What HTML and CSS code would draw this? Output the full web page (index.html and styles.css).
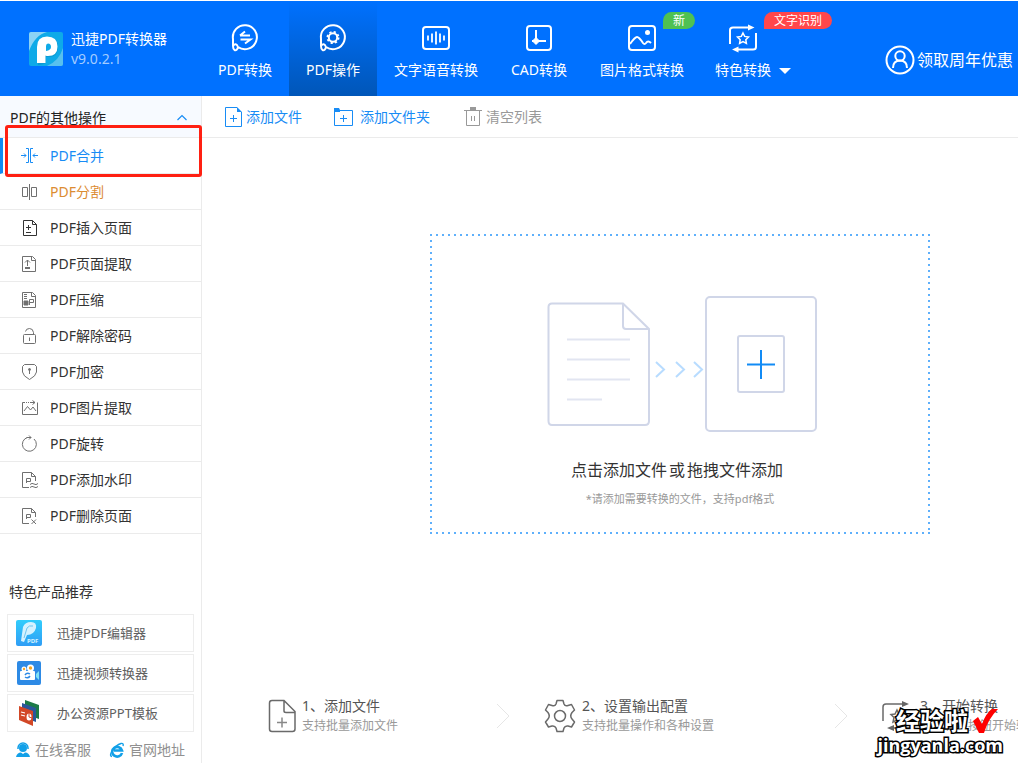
FILE: index.html
```html
<!DOCTYPE html>
<html lang="zh-CN">
<head>
<meta charset="utf-8">
<meta name="viewport" content="width=device-width, initial-scale=1">
<title>迅捷PDF转换器</title>
<link rel="stylesheet" href="styles.css">
</head>
<body>
<div class="app">
  <header class="header">
    <div class="brand">
      <svg class="brand-logo" viewBox="0 0 34 34" width="34" height="34">
        <rect width="34" height="34" rx="2" fill="#0eaae8"/>
        <path d="M0 19V2Q0 0 2 0H18Q6 3 0 19Z" fill="#8bd3f5"/>
        <path d="M34 16V32Q34 34 32 34H18Q30 29 34 16Z" fill="#58c0ee"/>
        <path d="M9 33V15Q9 5 18 5Q29 5 29 15Q29 25 20 25H17V31Q14 33 9 33Z" fill="#0789bd" opacity=".45"/>
        <path d="M8 31V15Q8 4.500 18 4.500Q28.500 4.500 28.500 14.500Q28.500 24 19 24Q17.500 24 16.500 23.500V31Z" fill="#fff"/>
        <path d="M17 19V14Q17 11.500 19 11.500Q22 11.500 22 15Q22 18 17 19Z" fill="#0eaae8"/>
      </svg>
      <div class="brand-text">
        <span class="brand-name">迅捷PDF转换器</span>
        <span class="brand-version">v9.0.2.1</span>
      </div>
    </div>
    <nav class="nav">
      <a class="nav-item" href="#convert">
        <svg class="nav-icon" viewBox="0 0 30 30"><path d="M3 16A12 12 0 1 1 8 24Q7 28 4.500 27Q3 26 3 23ZM3 23Q6 19 8 24" stroke-width="2"/><path d="M10 12.500H20M15 8.500L10 12.500M10.500 16.500H20.500L15 20.500" stroke-width="2"/></svg>
        <span>PDF转换</span>
      </a>
      <a class="nav-item nav-item-active" href="#operate" aria-current="page">
        <svg class="nav-icon" viewBox="0 0 30 30"><path d="M3 16A12 12 0 1 1 8 24Q7 28 4.500 27Q3 26 3 23ZM3 23Q6 19 8 24" stroke-width="2"/><circle cx="15" cy="14.500" r="4.200" stroke-width="2"/><circle cx="15" cy="14.500" r="5.600" stroke-width="1.800" stroke-dasharray="2.200 2.198"/></svg>
        <span>PDF操作</span>
      </a>
      <a class="nav-item nav-item-wide" href="#speech">
        <svg class="nav-icon" viewBox="0 0 30 30"><rect x="2" y="4" width="26" height="22" rx="3" stroke-width="2"/><path d="M7 12.500V17.500M11 10.500V19.500M15 8.500V21.500M19 10.500V19.500M23 12.500V17.500" stroke-width="1.800"/></svg>
        <span>文字语音转换</span>
      </a>
      <a class="nav-item" href="#cad">
        <svg class="nav-icon" viewBox="0 0 30 30"><rect x="3" y="3" width="24" height="24" rx="3" stroke-width="2"/><path d="M12 7V21M8 18H22" stroke-width="2"/><path d="M12 14.500L15.500 18L12 21.500L8.500 18Z" fill="#fff"/></svg>
        <span>CAD转换</span>
      </a>
      <a class="nav-item nav-item-wide" href="#image">
        <svg class="nav-icon" viewBox="0 0 30 30"><rect x="2" y="3" width="26" height="24" rx="3" stroke-width="2"/><path d="M3 21Q8 14 10 14T16 20Q17.500 22 19 20Q21 17 24 20" stroke-width="2"/><circle cx="20.500" cy="9.500" r="2.500" fill="#fff" stroke="none"/></svg>
        <span>图片格式转换</span>
        <em class="badge badge-new">新</em>
      </a>
      <a class="nav-item nav-item-menu" href="#special">
        <svg class="nav-icon" viewBox="0 0 30 30"><path d="M2 21V7Q2 4.500 5 4.500H21M28 10V24Q28 26.500 25 26.500H9" stroke-width="2"/><path d="M20 1.500L26.500 4.500L20 7.500ZM10.500 23.500L4 26.500L10.500 29.500Z" fill="#fff" stroke="none"/><path d="M15 10L16.700 13.400L20.500 14L17.800 16.700L18.400 20.500L15 18.700L11.600 20.500L12.200 16.700L9.500 14L13.300 13.400Z" stroke-width="1.500"/></svg>
        <span class="nav-menu-label">特色转换<i class="caret"></i></span>
        <em class="badge badge-ocr">文字识别</em>
      </a>
    </nav>
    <a class="user" href="#user">
      <svg viewBox="0 0 30 30" width="30" height="30" fill="none" stroke="#fff" stroke-width="2"><circle cx="15" cy="15" r="13.500"/><circle cx="15" cy="11" r="4.700"/><path d="M8 23Q8 15.500 15 15.500T22 23"/></svg>
      <span>领取周年优惠</span>
    </a>
  </header>

  <div class="body">
    <aside class="sidebar">
      <button class="group-title" type="button" aria-expanded="true">
        <span>PDF的其他操作</span>
        <svg viewBox="0 0 12 8" width="12" height="8"><path d="M1.500 6L6 1.500L10.500 6" fill="none" stroke="#188cf5" stroke-width="1.200"/></svg>
      </button>
      <ul class="tools">
        <li><a class="tool tool-active" href="#merge"><svg class="tool-icon" viewBox="0 0 18 18"><path d="M6 1.500H8.500V15.500H6M13 1.500H10.500V15.500H13M1 8.500H6M4 6.500L6 8.500L4 10.500M18 8.500H13M15 6.500L13 8.500L15 10.500"/></svg>PDF合并</a></li>
        <li><a class="tool tool-hover" href="#split"><svg class="tool-icon" viewBox="0 0 18 18"><path d="M2.500 4.500H7.500V13.500H2.500ZM11.500 4.500H16.500V13.500H11.500ZM9.500 1V17"/></svg>PDF分割</a></li>
        <li><a class="tool" href="#insert"><svg class="tool-icon tool-icon-dark" viewBox="0 0 18 18"><path d="M3.500 1.500H12.500L16.500 5.500V16.500H3.500ZM12.500 1.500V5.500H16.500M6 8.500H11M8.500 6V11M6 13.500H11"/></svg>PDF插入页面</a></li>
        <li><a class="tool" href="#pages"><svg class="tool-icon" viewBox="0 0 18 18"><path d="M2.500 1.500H12.500L15.500 4.500V16.500H2.500ZM11.500 1.500V5.500H15.500M7.500 11V5M5 7.500L7.500 5L10 7.500M5 12.500H10M5 13.500H10"/></svg>PDF页面提取</a></li>
        <li><a class="tool" href="#compress"><svg class="tool-icon" viewBox="0 0 18 18"><path d="M2.500 1.500H12.500L15.500 4.500V16.500H2.500ZM11.500 1.500V5.500H15.500M9.500 14V8.500H13.500V11.500H10"/><path d="M5.500 3V9" stroke-width="3" stroke-dasharray="1 1"/><path d="M4 10H8V14H4Z" fill="currentColor"/></svg>PDF压缩</a></li>
        <li><a class="tool" href="#unlock"><svg class="tool-icon" viewBox="0 0 18 18"><rect x="3.500" y="7.500" width="12" height="9" rx="1"/><path d="M5.500 4.500Q6 1.500 9.500 1.500T13.500 5.500V7.500M9.500 10.500V14"/></svg>PDF解除密码</a></li>
        <li><a class="tool" href="#encrypt"><svg class="tool-icon" viewBox="0 0 18 18"><path d="M4.500 1.500H14.500L16.500 3.500V9Q16 13 9.500 16.500Q3 13 2.500 9V3.500Z"/><circle cx="9.500" cy="6.500" r="1" fill="currentColor"/><path d="M9.500 7V11"/></svg>PDF加密</a></li>
        <li><a class="tool" href="#images"><svg class="tool-icon" viewBox="0 0 18 18"><path d="M5 3.500H2.500V15.500H17.500V3.500M4 12L7.500 7.500L10.500 11L13 8L16 12M11 3.500H15M12.500 1.500L15 3.500L12.500 5.500"/><path d="M6 3.500H11" stroke-dasharray="1 1"/></svg>PDF图片提取</a></li>
        <li><a class="tool" href="#rotate"><svg class="tool-icon" viewBox="0 0 18 18"><path d="M7.500 2.500A7 7 0 1 0 14 4M6.500 2.500H11M9 .5L11 2.500L9 4.500"/></svg>PDF旋转</a></li>
        <li><a class="tool" href="#watermark"><svg class="tool-icon" viewBox="0 0 18 18"><path d="M9 16.500H2.500V1.500H11.500L15.500 5.500V10M11.500 1.500V5.500H15.500M6.500 12V7.500H10.500V10.500H7M10 13.500Q12 11.500 14 13T18 12.500M10 16.500Q12 14.500 14 16T18 15.500"/></svg>PDF添加水印</a></li>
        <li><a class="tool" href="#delete"><svg class="tool-icon" viewBox="0 0 18 18"><path d="M9 16.500H2.500V1.500H11.500L15.500 5.500V10M11.500 1.500V5.500H15.500M6.500 12V7.500H10.500V10.500H7M11.500 12.500L16 17M16 12.500L11.500 17"/></svg>PDF删除页面</a></li>
      </ul>
      <div class="highlight"></div>

      <section class="products">
        <h2 class="products-title">特色产品推荐</h2>
        <a class="product" href="#editor">
          <svg viewBox="0 0 26 26" width="26" height="26"><defs><linearGradient id="edit" x2="0" y2="1"><stop stop-color="#32cdfc"/><stop offset="1" stop-color="#2f9df5"/></linearGradient></defs><rect width="26" height="26" rx="2" fill="url(#edit)"/><path d="M5 21L7 7Q9 2 15 2Q21 2 20 8Q18 15 11 15L8 22Z" fill="#d5f2ff"/><path d="M8 18L11 8Q13 5 17 6" fill="none" stroke="#6fc5ef"/><text x="11" y="23" class="logo-caption">PDF</text></svg>
          <span>迅捷PDF编辑器</span>
        </a>
        <a class="product" href="#video">
          <svg viewBox="0 0 26 26" width="26" height="26"><rect x="1" y="1" width="24" height="24" rx="2" fill="#2d8ae5"/><circle cx="8" cy="9" r="2.500" fill="#fff"/><circle cx="14.500" cy="8" r="3.500" fill="#fff"/><circle cx="8" cy="9" r="1.200" fill="#f5a623"/><circle cx="14.500" cy="8" r="1.700" fill="#f5a623"/><rect x="4" y="11" width="15" height="9" rx="1" fill="#fff"/><path d="M20 14L23 11V20L20 17Z" fill="#7fe0f5"/><path d="M9 15Q11 12 14 14M14 16Q12 19 9 17" fill="none" stroke="#2d8ae5" stroke-width="1.500"/></svg>
          <span>迅捷视频转换器</span>
        </a>
        <a class="product" href="#ppt">
          <svg viewBox="0 0 26 26" width="26" height="26"><path d="M9 0L23 5V19L9 14Z" fill="#1c7a47"/><path d="M6 3L20 8V22L6 17Z" fill="#2b579a"/><path d="M3 6L17 11V26L3 20Z" fill="#d24726"/><path d="M5 12L9 13M5 15L9 16" stroke="#fff" stroke-width="1.200"/><ellipse cx="13" cy="17" rx="2.500" ry="3.500" fill="#fff"/><path d="M13 17V13M13 17L16 18" stroke="#d24726"/></svg>
          <span>办公资源PPT模板</span>
        </a>
        <div class="support">
          <a href="#service"><svg viewBox="0 0 16 16" width="16" height="16"><circle cx="8" cy="6" r="4" fill="#12a0e8"/><path d="M3 7V6A5 5 0 0 1 13 6V7" fill="none" stroke="#12a0e8" stroke-width="1.500"/><path d="M1 15Q2 10.500 6 10.500L8 12L10 10.500Q14 10.500 15 15Z" fill="#12a0e8"/></svg>在线客服</a>
          <a href="#site"><svg viewBox="0 0 16 16" width="16" height="16"><path d="M13 11A5 4.800 0 1 1 13 8.500H5" fill="none" stroke="#12a0e8" stroke-width="2.600"/><path d="M3 14.500Q0 14 3 9Q7 3 12 1.500Q15 1 14 4" fill="none" stroke="#12a0e8" stroke-width="1.400"/></svg>官网地址</a>
        </div>
      </section>
    </aside>

    <main class="main">
      <div class="toolbar">
        <button class="action" type="button"><svg viewBox="0 0 17 20" width="17" height="20"><path d="M12 .5H.5V19.500H16.500V5" /><path d="M12 0L17 5H12Z" fill="currentColor" stroke="none"/><path d="M5 11.500H12M8.500 8V15"/></svg>添加文件</button>
        <button class="action" type="button"><svg viewBox="0 0 22 20" width="22" height="20"><path d="M.5 3.500H18.500V18.500H.5Z"/><path d="M0 1H5L6 3V5H0Z" fill="currentColor" stroke="none"/><path d="M6 11.500H13M9.500 8V15"/></svg>添加文件夹</button>
        <button class="action action-muted" type="button"><svg viewBox="-2 0 20 20" width="20" height="20"><path d="M0 3.500H18M2.500 4V18.500H15.500V4M7.500 9V14M10.500 9V14"/><path d="M6 0H12V3H6Z" fill="currentColor" stroke="none"/></svg>清空列表</button>
      </div>
      <div class="stage">
        <button class="dropzone" type="button">
          <svg class="dropzone-art" viewBox="547 295 271 136" width="271" height="136" fill="none" stroke-width="2" stroke="#d0d6e8">
            <path d="M552 302.500H623L649 328V420Q649 424 645 424H552Q548.500 424 548.500 420V306Q548.500 302.500 552 302.500ZM623 303V325Q623 328 626 328H649"/>
            <path d="M567 338.500H630M567 358.500H630M567 378.500H630M567 398.500H602" stroke="#e2e5f1"/>
            <path d="M656 361L664 368.500L656 376M676 361L684 368.500L676 376M694 361L702 368.500L694 376" stroke="#b8dcff"/>
            <rect x="706" y="296" width="110" height="134" rx="4"/>
            <rect x="738" y="335" width="46" height="56" rx="2"/>
            <path d="M747 363.500H775M761 349V378" stroke="#128bf5"/>
          </svg>
          <span class="dropzone-title"><span>点击添加文件</span><span>或</span><span>拖拽文件添加</span></span>
          <span class="dropzone-note">*请添加需要转换的文件，支持pdf格式</span>
        </button>
      </div>
      <ol class="steps">
        <li class="step">
          <svg class="step-icon" viewBox="0 0 32 34"><path d="M4 1.500H16L27 12.500V30Q27 32.500 24.500 32.500H4Q1.500 32.500 1.500 30V4Q1.500 1.500 4 1.500ZM16 2V12Q16 13.500 18 13.500H27"/><path d="M9 23.500H19M14 18.500V28.500" stroke="#888"/></svg>
          <div class="step-text"><strong>1、添加文件</strong><small>支持批量添加文件</small></div>
          <svg class="step-arrow" viewBox="0 0 14 26"><path d="M1 1L13 13L1 25"/></svg>
        </li>
        <li class="step">
          <svg class="step-icon" viewBox="0 0 32 34"><path d="M12 5L13 1.500H19L20 5Q21 7.500 24 6.500L27.500 5.500L30.500 11L28 13.500Q25.500 17 28 20L30.500 23L27.500 28L24 27Q21 26.500 20 29L19 32.500H13L12 29Q11 26.500 8 27L4.500 28L1.500 23L4 20Q6.500 17 4 13.500L1.500 11L4.500 5.500L8 6.500Q11 7.500 12 5Z" stroke-linejoin="round"/><circle cx="16" cy="17" r="5.500"/></svg>
          <div class="step-text"><strong>2、设置输出配置</strong><small>支持批量操作和各种设置</small></div>
          <svg class="step-arrow" viewBox="0 0 14 26"><path d="M1 1L13 13L1 25"/></svg>
        </li>
        <li class="step">
          <svg class="step-icon" viewBox="0 0 32 34"><path d="M1 22V8Q1 5 4 5H22M30 12V26Q30 29 27 29H9"/><path d="M20 2L27 5L20 8ZM12 26L5 29L12 32Z" fill="#666" stroke="none"/><path d="M15 11L17 15L21 15.500L18 18.500L19 23L15 21L11 23L12 18.500L9 15.500L13 15Z"/></svg>
          <div class="step-text"><strong>3、开始转换</strong><small>点击转换按钮开始转换</small></div>
        </li>
      </ol>
    </main>
  </div>

  <div class="stamp">
    <div class="stamp-top"><span>经验啦</span><svg viewBox="0 0 25 26" width="25" height="26"><path d="M0 13L5 9L9 16Q13 5 19 1H25Q15 11 11 25H6Z" fill="#f00"/></svg></div>
    <div class="stamp-site">jingyanla.com</div>
  </div>
</div>
</body>
</html>
```
FILE: styles.css
```css
* { box-sizing: border-box; }

body {
  margin: 0;
  background: #fff;
  color: #333;
  font: 14px/20px "Noto Sans", "Noto Sans CJK SC", sans-serif;
}

a { color: inherit; text-decoration: none; }
button { border: 0; padding: 0; background: none; color: inherit; font: inherit; cursor: pointer; }
ul, ol { margin: 0; padding: 0; list-style: none; }
svg { flex: none; }

.app {
  position: relative;
  display: flex;
  flex-direction: column;
  min-height: 100vh;
  padding-top: 1px;
  overflow: hidden;
}

/* Header */
.header { display: flex; height: 95px; background: #0071ff; color: #fff; }
.brand { display: flex; align-items: center; gap: 8px; width: 201px; padding-left: 29px; }
.brand-text { display: flex; flex-direction: column; }
.brand-version { color: #a3ccff; }
.nav { display: flex; }
.nav-item {
  position: relative;
  display: flex;
  flex-direction: column;
  align-items: center;
  gap: 7px;
  width: 88px;
  padding-top: 22px;
  white-space: nowrap;
}
.nav-item-wide { width: 118px; }
.nav-item-menu { width: 84px; }
.nav-item-active { background: linear-gradient(#0071ff, #0056b8); }
.nav-icon { width: 30px; height: 30px; fill: none; stroke: #fff; }
.nav-menu-label { position: relative; }
.caret {
  position: absolute;
  left: 64px;
  top: 8px;
  border: 6px solid transparent;
  border-top-color: #fff;
  border-bottom: 0;
}
.badge {
  position: absolute;
  top: 11px;
  padding: 0 10px;
  border-radius: 9px 9px 9px 0;
  font-size: 12px;
  line-height: 17px;
  font-style: normal;
}
.badge-new { left: 80px; background: #4fc152; }
.badge-ocr { left: 63px; background: #ff474b; }
.user {
  display: flex;
  align-items: center;
  gap: 2px;
  margin-left: auto;
  padding: 23px 5px 0 0;
  font-size: 16px;
  white-space: nowrap;
}

.body { display: flex; flex: 1; }

/* Sidebar */
.sidebar { position: relative; flex: none; width: 202px; border-right: 1px solid #ebebeb; }
.group-title {
  display: flex;
  align-items: center;
  justify-content: space-between;
  width: 100%;
  height: 42px;
  padding: 2px 13px 0 10px;
  background: #f7faff;
  border-bottom: 1px solid #ebebeb;
  color: #222;
}
.tool {
  display: flex;
  align-items: center;
  gap: 12px;
  height: 36px;
  padding: 1px 0 0 20px;
  border-bottom: 1px solid #ebebeb;
}
.tool-icon { width: 18px; height: 18px; fill: none; stroke: currentColor; color: #707070; }
.tool-icon-dark { color: #333; }
.tool-active { padding-left: 17px; border-left: 3px solid #128bf5; color: #188cf5; }
.tool-active .tool-icon { color: #188cf5; }
.tool-hover { color: #dc8c32; }
.highlight {
  position: absolute;
  top: 29px;
  left: 5px;
  right: -1px;
  height: 52px;
  border: 3px solid #ff2012;
  border-radius: 3px;
  pointer-events: none;
}

.products { display: flex; flex-direction: column; gap: 2px; padding: 48px 7px 0; }
.products-title { margin: 0 2px 10px; font-size: 14px; font-weight: 400; }
.product {
  display: flex;
  align-items: center;
  gap: 15px;
  height: 38px;
  padding-left: 8px;
  border: 1px solid #ededed;
  color: #606060;
  font-size: 13px;
}
.logo-caption { fill: #d5f2ff; font: 700 6px "Noto Sans", sans-serif; }
.support { display: flex; justify-content: space-between; padding: 6px 9px 0 8px; color: #909090; }
.support a { display: flex; align-items: center; gap: 4px; }

/* Workspace */
.main { display: flex; flex: 1 0 956px; flex-direction: column; }
.toolbar {
  display: flex;
  align-items: center;
  gap: 32px;
  height: 42px;
  padding: 1px 0 0 23px;
  border-bottom: 1px solid #ebebeb;
}
.action { display: flex; align-items: center; gap: 4px; color: #188cf5; }
.action svg { fill: none; stroke: currentColor; }
.action-muted { color: #999; }
.stage { display: flex; flex: 1; align-items: center; justify-content: center; }
.dropzone {
  display: flex;
  flex-direction: column;
  align-items: center;
  width: 500px;
  height: 300px;
  padding-top: 62px;
  background:
    repeating-linear-gradient(90deg, #5eb0fb 0 2px, transparent 2px 6px) top / 100% 2px no-repeat,
    repeating-linear-gradient(90deg, #5eb0fb 0 2px, transparent 2px 6px) bottom / 100% 2px no-repeat,
    repeating-linear-gradient(#5eb0fb 0 2px, transparent 2px 6px) left / 2px 100% no-repeat,
    repeating-linear-gradient(#5eb0fb 0 2px, transparent 2px 6px) right / 2px 100% no-repeat;
}
.dropzone-art { margin-left: 4px; }
.dropzone-title { display: flex; gap: 2px; margin: 28px 6px 9px 0; font-size: 16px; }
.dropzone-note { color: #999; font-size: 11px; }

.steps { display: flex; padding: 66px 0 27px 66px; }
.step { display: flex; flex: none; align-items: center; gap: 6px; width: 276px; white-space: nowrap; }
.step:nth-child(2) { width: 338px; }
.step:first-child { gap: 2px; }
.step-icon { width: 32px; height: 34px; fill: none; stroke: #6a6a6a; stroke-width: 1.5; }
.step-text { padding-top: 1px; }
.step strong, .step small { display: block; font-weight: 400; }
.step strong { font-size: 14px; color: #555; }
.step small { font-size: 12px; color: #999; }
.step-arrow { width: 14px; height: 26px; margin: 0 34px 0 auto; fill: none; stroke: #e6e6e6; }

/* Corner stamp */
.stamp {
  position: absolute;
  right: 15px;
  bottom: 7px;
  color: #fff;
  font-weight: 700;
  paint-order: stroke fill;
  -webkit-text-stroke: 3px #000;
}
.stamp-top { display: flex; align-items: center; justify-content: flex-end; gap: 5px; padding-right: 5px; font-size: 24px; line-height: 26px; }
.stamp-site { font: 700 18px/22px "Open Sans", sans-serif; }
```
